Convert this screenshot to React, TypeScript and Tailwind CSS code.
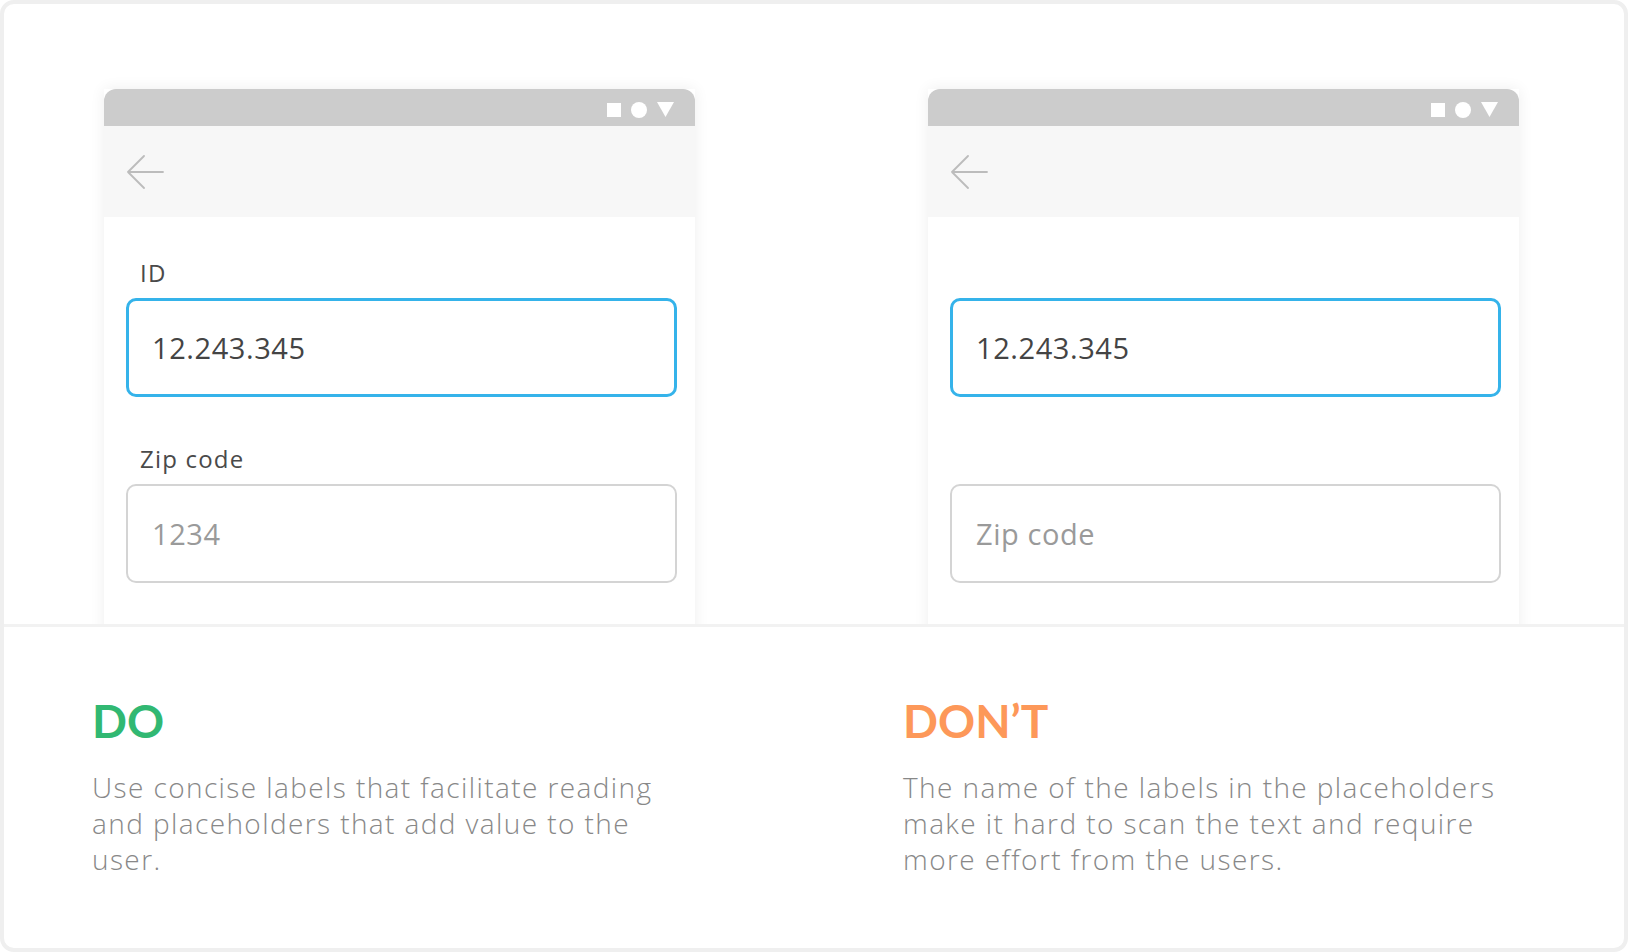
import React from "react";

interface FieldProps {
  label?: string;
  value: string;
  active?: boolean;
}

function Field({ label, value, active }: FieldProps) {
  return (
    <div className="flex flex-col">
      {/* label row keeps its height even when the label is missing */}
      <div className="h-[28px] pl-[14px] text-[24px] leading-[28px] tracking-[0.05em] text-[#4a4a4a]">
        {label ?? ""}
      </div>
      <div
        className={`mt-[11px] flex h-[99px] w-[551px] items-center rounded-[10px] bg-white pl-[23px] text-[29px] tracking-[0.02em] ${
          active
            ? "border-[3px] border-[#35b3ea] text-[#444444]"
            : "border-2 border-[#d4d4d4] pl-[24px] text-[#9a9a9a]"
        }`}
      >
        {value}
      </div>
    </div>
  );
}

function StatusIcons() {
  return (
    <div className="flex items-center gap-[10px]">
      <span className="block h-[14px] w-[14px] bg-white" />
      <span className="block h-[16px] w-[16px] rounded-full bg-white" />
      <svg width="17" height="15" viewBox="0 0 17 15" aria-hidden="true">
        <polygon points="0,0 17,0 8.5,15" fill="#ffffff" />
      </svg>
    </div>
  );
}

function Phone({ withLabels }: { withLabels: boolean }) {
  return (
    <div className="flex h-[560px] w-[591px] shrink-0 flex-col bg-white shadow-[0_0_14px_rgba(0,0,0,0.07)]">
      <div className="flex h-[37px] items-center justify-end rounded-t-[12px] bg-[#cccccc] pr-[21px] pt-[4px]">
        <StatusIcons />
      </div>
      <div className="flex h-[91px] items-center bg-[#f7f7f7] pl-[23px]">
        <svg width="37" height="34" viewBox="0 0 37 34" fill="none" aria-hidden="true">
          <path
            d="M36 17H1M1 17L17 1M1 17L17 33"
            stroke="#bcbcbc"
            strokeWidth="1.8"
            strokeLinecap="round"
            strokeLinejoin="round"
          />
        </svg>
      </div>
      <div className="flex flex-col gap-[48px] pl-[22px] pt-[42px]">
        <Field label={withLabels ? "ID" : undefined} value="12.243.345" active />
        <Field
          label={withLabels ? "Zip code" : undefined}
          value={withLabels ? "1234" : "Zip code"}
        />
      </div>
    </div>
  );
}

export default function App() {
  return (
    <div
      className="h-[952px] w-[1628px] overflow-hidden rounded-[14px] border-4 border-[#efefef] bg-white"
      style={{ fontFamily: "'Open Sans', Lato, sans-serif" }}
    >
      <div className="flex h-[620px] gap-[233px] overflow-hidden pl-[100px] pt-[85px]">
        <Phone withLabels />
        <Phone withLabels={false} />
      </div>
      <div className="h-[3px] bg-[#f2f2f2]" />
      <div className="flex pl-[88px] pt-[71px]">
        <div className="w-[811px] shrink-0">
          <div className="font-['Lato'] text-[46px] font-bold leading-[46px] text-[#31b872]">DO</div>
          <p className="mt-[25px] w-[592px] text-[28px] font-light leading-[36px] tracking-[0.05em] text-[#888888]">
            Use concise labels that facilitate reading and placeholders that add value to the user.
          </p>
        </div>
        <div>
          <div className="font-['Lato'] text-[46px] font-bold leading-[46px] text-[#fd9859]">DON’T</div>
          <p className="mt-[25px] w-[618px] text-[28px] font-light leading-[36px] tracking-[0.05em] text-[#888888]">
            The name of the labels in the placeholders make it hard to scan the text and require
            more effort from the users.
          </p>
        </div>
      </div>
    </div>
  );
}
